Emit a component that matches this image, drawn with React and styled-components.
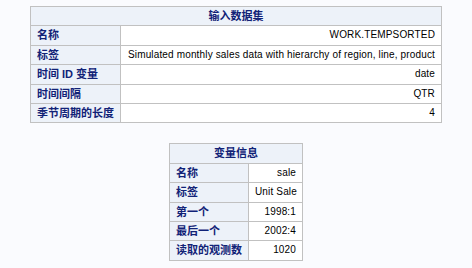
import React from "react";
import styled, { createGlobalStyle } from "styled-components";

const GlobalStyle = createGlobalStyle`
  html, body {
    margin: 0;
    padding: 0;
    background: #fafbfe;
  }
  body {
    font-family: "Liberation Sans", Arial, "Noto Sans CJK SC", sans-serif;
  }
`;

const Page = styled.div`
  display: flex;
  flex-direction: column;
  align-items: center;
  gap: 20px;
  padding-top: 6px;
`;

const Table = styled.table`
  table-layout: fixed;
  width: ${(p) => p.$w}px;
  border-collapse: separate;
  border-spacing: 0;
  border-style: solid;
  border-color: #c1c1c1;
  border-width: 1px 0 0 1px;
  background: #ffffff;
`;

const Caption = styled.th`
  background: #edf2f9;
  color: #112277;
  font-family: "Liberation Sans", "Noto Sans CJK SC", sans-serif;
  font-weight: bold;
  font-size: 11px;
  line-height: 12.4px;
  text-align: center;
  padding: 3px 6px;
  border-style: solid;
  border-color: #c1c1c1;
  border-width: 0 1px 1px 0;
`;

const Label = styled.th`
  background: #edf2f9;
  color: #112277;
  font-family: "Liberation Sans", "Noto Sans CJK SC", sans-serif;
  font-weight: bold;
  font-size: 11px;
  line-height: 12.4px;
  text-align: left;
  white-space: nowrap;
  padding: 3px 6px;
  border-style: solid;
  border-color: #c1c1c1;
  border-width: 0 1px 1px 0;
`;

const Value = styled.td`
  color: #000000;
  font-size: 10px;
  letter-spacing: 0.15px;
  line-height: 12.4px;
  text-align: right;
  white-space: nowrap;
  padding: 3px 6px;
  border-style: solid;
  border-color: #c1c1c1;
  border-width: 0 1px 1px 0;
`;

const dataset = [
  ["名称", "WORK.TEMPSORTED"],
  ["标签", "Simulated monthly sales data with hierarchy of region, line, product"],
  ["时间 ID 变量", "date"],
  ["时间间隔", "QTR"],
  ["季节周期的长度", "4"],
];

const variable = [
  ["名称", "sale"],
  ["标签", "Unit Sale"],
  ["第一个", "1998:1"],
  ["最后一个", "2002:4"],
  ["读取的观测数", "1020"],
];

function InfoTable({ title, rows, width, labelWidth }) {
  return (
    <Table $w={width}>
      <colgroup>
        <col style={{ width: labelWidth }} />
        <col />
      </colgroup>
      <thead>
        <tr>
          <Caption colSpan={2}>{title}</Caption>
        </tr>
      </thead>
      <tbody>
        {rows.map(([k, v]) => (
          <tr key={k}>
            <Label>{k}</Label>
            <Value>{v}</Value>
          </tr>
        ))}
      </tbody>
    </Table>
  );
}

export default function App() {
  return (
    <>
      <GlobalStyle />
      <Page>
        <InfoTable title="输入数据集" rows={dataset} width={412} labelWidth={90} />
        <InfoTable title="变量信息" rows={variable} width={134} labelWidth={79} />
      </Page>
    </>
  );
}
